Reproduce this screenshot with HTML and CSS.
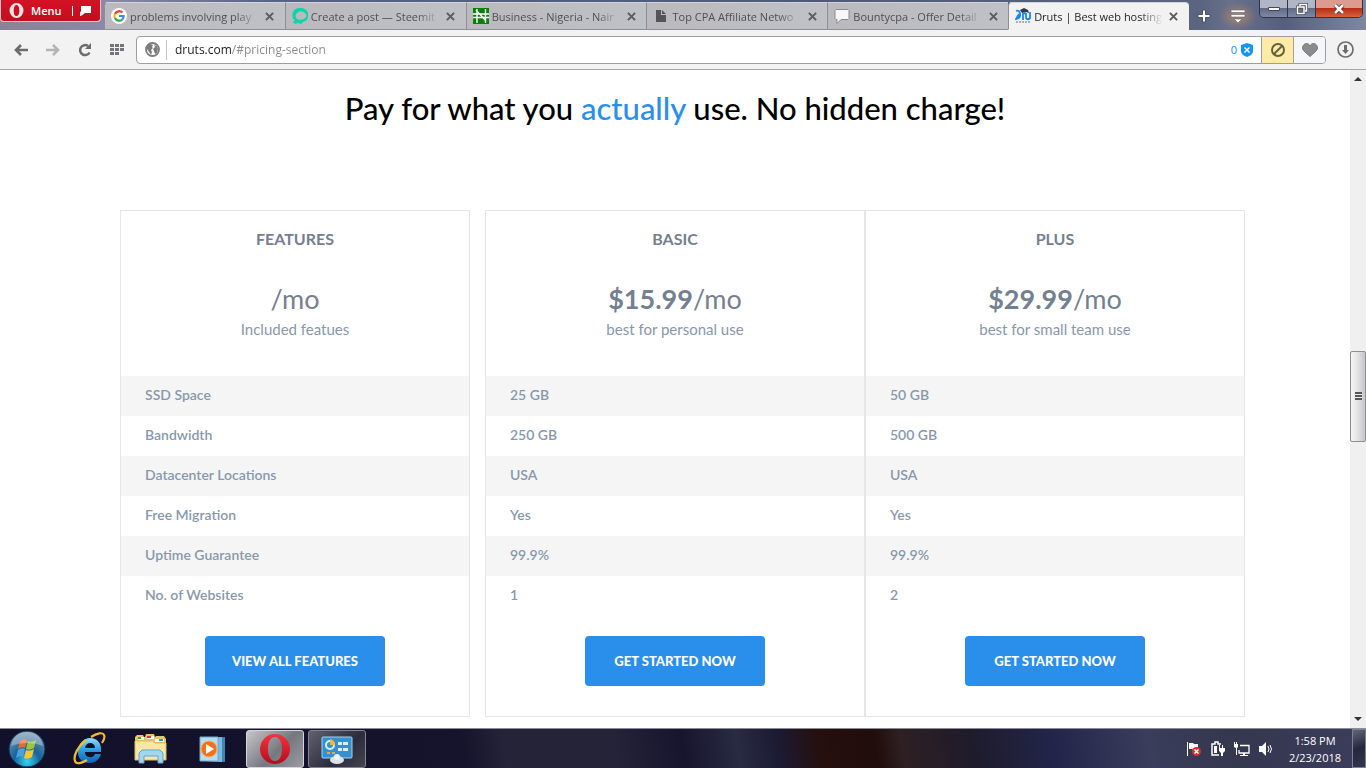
FILE: index.html
```
<!DOCTYPE html>
<html lang="en">
<head>
    <meta charset="UTF-8">
    <meta name="viewport" content="width=device-width, initial-scale=1.0">
    <title>Druts | Best web hosting</title>
    <link rel="stylesheet" href="styles.css">
</head>
<body>
    <svg class="sprite" aria-hidden="true">
        <symbol id="icon-close" viewBox="0 0 10 10">
            <path d="M1 1l8 8M9 1l-8 8" stroke="currentColor" stroke-width="2.2" fill="none"/>
        </symbol>
    </svg>

    <header class="tab-strip">
        <button class="menu-button">
            <svg width="15" height="15" viewBox="0 0 15 15"><path fill-rule="evenodd" fill="#f0e4e5" d="M7.500 0a7 7.500 0 1 0 0 15a7 7.500 0 1 0 0-15zM7.500 2c2 0 2.800 2.500 2.800 5.500S9.500 13 7.500 13s-2.800-2.500-2.800-5.500S5.500 2 7.500 2z"/></svg>
            <span class="menu-label">Menu</span>
            <svg width="11" height="10" viewBox="0 0 11 10"><path fill="#fff" d="M1 0h10v7H5L1 10H0V7l1-2z"/></svg>
        </button>
        <nav class="tabs">
            <div class="tab">
                <svg class="favicon" viewBox="0 0 16 16"><circle cx="8" cy="8" r="8" fill="#fff"/><g fill="none" stroke-width="2.200"><path stroke="#ea4335" d="M4 6a4.600 4.600 0 0 1 7.500-1.400"/><path stroke="#fbbc05" d="M4 6a4.600 4.600 0 0 0 0 4"/><path stroke="#34a853" d="M4 10a4.600 4.600 0 0 0 7.300 1.500"/><path stroke="#4285f4" d="M8 8h4.600a4.600 4.600 0 0 1-1.300 3.500"/></g></svg>
                <a href="#" class="tab-title">problems involving play</a>
                <button class="tab-close" aria-label="Close tab"><svg><use href="#icon-close"/></svg></button>
            </div>
            <div class="tab">
                <svg class="favicon" viewBox="0 0 16 16"><path fill="#06d6a9" fill-rule="evenodd" d="M1 11C-1 5 2 0 8 0c4 0 7 2 8 5 1 4-1 8-5 9l-2 2-3-1-3 1-2-2 2-2zM5 5c-2 2-2 4 0 6l3 1 4-1c2-1 3-3 2-5-2-3-6-4-9-1z"/></svg>
                <a href="#" class="tab-title">Create a post — Steemit</a>
                <button class="tab-close" aria-label="Close tab"><svg><use href="#icon-close"/></svg></button>
            </div>
            <div class="tab">
                <svg class="favicon" viewBox="0 0 16 16"><path fill="#078007" d="M0 0h16v16H0z"/><path fill="none" stroke="#fff" stroke-width="1.400" d="M4 1v14M12.500 1v14M0 6h16M0 9.500h16M3 2l10 11"/></svg>
                <a href="#" class="tab-title">Business - Nigeria - Nair</a>
                <button class="tab-close" aria-label="Close tab"><svg><use href="#icon-close"/></svg></button>
            </div>
            <div class="tab">
                <svg class="favicon" viewBox="0 0 16 16"><path fill="#555558" d="M3 2h5v5h5v7H3zM9 2l4 4H9z"/></svg>
                <a href="#" class="tab-title">Top CPA Affiliate Netwo</a>
                <button class="tab-close" aria-label="Close tab"><svg><use href="#icon-close"/></svg></button>
            </div>
            <div class="tab">
                <svg class="favicon" viewBox="0 0 16 16"><path fill="#f7f7f7" stroke="#8b8b8e" d="M2 1.500h12l1 1v8l-1 1H7l-4 4v-4H2l-1-1v-8z"/></svg>
                <a href="#" class="tab-title">Bountycpa - Offer Detail</a>
                <button class="tab-close" aria-label="Close tab"><svg><use href="#icon-close"/></svg></button>
            </div>
            <div class="tab active">
                <svg class="favicon" viewBox="0 0 16 16"><g fill="none" stroke="#1687f8" stroke-width="1.800"><path d="M1 3c5-2 6 7 0 8l3-5M8 12V6l3-1M11 5v4c0 3 4 3 4 0V4M15 4v7"/></g><path fill="#333a46" d="M5 2l4-2 4 2 1 3-3-1-4 1z"/><path stroke="#626a78" stroke-dasharray="2 1" d="M1 14h14"/></svg>
                <a href="#" class="tab-title">Druts | Best web hosting</a>
                <button class="tab-close" aria-label="Close tab"><svg><use href="#icon-close"/></svg></button>
            </div>
        </nav>
        <button class="strip-button" aria-label="New tab">
            <svg width="14" height="14" viewBox="0 0 14 14"><path fill="#fff" stroke="#4a5066" d="M5.500 1h3v4.500H13v3H8.500V13h-3V8.500H1v-3h4.500z"/></svg>
        </button>
        <button class="strip-button tab-menu" aria-label="Tab menu">
            <svg width="16" height="15" viewBox="0 0 16 15"><path fill="#fff" stroke="#625f69" stroke-width=".6" d="M1 1h14v2.500H1zM1 5.500h14V8H1zM4 10h8l-4 4z"/></svg>
        </button>
        <div class="window-buttons">
            <button aria-label="Minimize"><svg width="12" height="6"><path fill="#fff" stroke="#454a59" d="M.5 1.500h11v3H.5z"/></svg></button>
            <button aria-label="Restore"><svg width="12" height="12" viewBox="0 0 12 12"><g fill="none"><path stroke="#454a59" stroke-width="3" d="M4 3V1.500h6.500V8H9M1.500 4H8v6.500H1.500z"/><path stroke="#fff" stroke-width="1.500" d="M4 3V1.500h6.500V8H9M1.500 4H8v6.500H1.500z"/></g></svg></button>
            <button class="window-close" aria-label="Close"><svg width="12" height="10" viewBox="0 0 12 10"><path stroke="#5a2626" stroke-width="4" d="M2 1l8 8M10 1L2 9"/><path stroke="#fff" stroke-width="2.500" d="M2 1l8 8M10 1L2 9"/></svg></button>
        </div>
    </header>

    <div class="toolbar">
        <button class="tool" aria-label="Back"><svg width="14" height="12" viewBox="0 0 14 12"><path d="M7 1L2 6l5 5M2 6h12" fill="none" stroke="#6b6c6e" stroke-width="2.600"/></svg></button>
        <button class="tool" aria-label="Forward"><svg width="14" height="12" viewBox="0 0 14 12"><path d="M7 1l5 5-5 5M12 6H0" fill="none" stroke="#b4b4b6" stroke-width="2.600"/></svg></button>
        <button class="tool" aria-label="Reload"><svg width="14" height="14" viewBox="0 0 14 14"><path d="M11.500 9.500A5 5 0 1 1 10 3" fill="none" stroke="#6b6c6e" stroke-width="2.500"/><path d="M13 0v6H7z" fill="#6b6c6e"/></svg></button>
        <button class="tool" aria-label="Speed dial"><svg width="14" height="11" viewBox="0 0 14 11"><path d="M0 0h4v3H0zM5 0h4v3H5zM10 0h4v3h-4zM0 4h4v3H0zM5 4h4v3H5zM10 4h4v3h-4zM0 8h4v3H0zM5 8h4v3H5z" fill="#737476"/></svg></button>
        <div class="address-bar">
            <span class="site-info"><svg width="15" height="15" viewBox="0 0 15 15"><circle cx="7.500" cy="7.500" r="6.500" fill="#fff" stroke="#7c7c7e" stroke-width="1.800"/><path fill="#7c7c7e" d="M2 4l3-2 3 1-1 2 1 1-2 2 1 2-1 3-2-3-2-3zM9 3l3 1 1 3-1 4-2 1-1-3-1-2 2-2z"/></svg></span>
            <input class="address" type="text" aria-label="Address" value="druts.com/#pricing-section">
            <span class="blocked">0</span>
            <svg class="shield" width="12" height="14" viewBox="0 0 12 14"><path fill="#0b97ff" d="M6 0l6 2v6c0 3-3 5-6 6-3-1-6-3-6-6V2z"/><path stroke="#fff" stroke-width="1.500" d="M3.500 4.500l5 5M8.500 4.500l-5 5"/></svg>
            <button class="ad-block" aria-label="Ad blocker"><svg width="14" height="14" viewBox="0 0 14 14"><circle cx="7" cy="7" r="6" fill="none" stroke="#65603f" stroke-width="2"/><path stroke="#65603f" stroke-width="2" d="M3 11l8-8"/></svg></button>
            <button class="bookmark" aria-label="Bookmark"><svg width="16" height="14" viewBox="0 0 16 14"><path fill="#8b8b8c" stroke="#747475" d="M8 13.500L1.500 7.500C-1 4 2 .5 4.500.5 6 .5 7.500 1.500 8 3c.5-1.500 2-2.500 3.500-2.500C14 .5 17 4 14.500 7.500z"/></svg></button>
        </div>
        <button class="download" aria-label="Downloads"><svg width="17" height="17" viewBox="0 0 17 17"><circle cx="8.500" cy="8.500" r="7.500" fill="none" stroke="#6c6d6f" stroke-width="1.700"/><path fill="#6c6d6f" d="M7 4h3v5h2l-3.500 4L5 9h2z"/></svg></button>
    </div>

    <div class="viewport">
        <main class="page" id="pricing-section">
            <h1>Pay for what you <span>actually</span> use. No hidden charge!</h1>
            <div class="pricing">
                <section class="plan plan-features">
                    <h2>FEATURES</h2>
                    <p class="price">/mo</p>
                    <p class="note">Included featues</p>
                    <ul>
                        <li>SSD Space</li>
                        <li>Bandwidth</li>
                        <li>Datacenter Locations</li>
                        <li>Free Migration</li>
                        <li>Uptime Guarantee</li>
                        <li>No. of Websites</li>
                    </ul>
                    <a href="#" class="btn">VIEW ALL FEATURES</a>
                </section>
                <section class="plan">
                    <h2>BASIC</h2>
                    <p class="price"><b>$15.99</b>/mo</p>
                    <p class="note">best for personal use</p>
                    <ul>
                        <li>25 GB</li>
                        <li>250 GB</li>
                        <li>USA</li>
                        <li>Yes</li>
                        <li>99.9%</li>
                        <li>1</li>
                    </ul>
                    <a href="#" class="btn">GET STARTED NOW</a>
                </section>
                <section class="plan">
                    <h2>PLUS</h2>
                    <p class="price"><b>$29.99</b>/mo</p>
                    <p class="note">best for small team use</p>
                    <ul>
                        <li>50 GB</li>
                        <li>500 GB</li>
                        <li>USA</li>
                        <li>Yes</li>
                        <li>99.9%</li>
                        <li>2</li>
                    </ul>
                    <a href="#" class="btn">GET STARTED NOW</a>
                </section>
            </div>
        </main>
        <div class="scrollbar">
            <svg width="8" height="4"><path fill="#333" d="M0 4l4-4 4 4z"/></svg>
            <div class="track"><div class="thumb"></div></div>
            <svg width="8" height="4"><path fill="#333" d="M0 0l4 4 4-4z"/></svg>
        </div>
    </div>

    <footer class="taskbar">
        <button class="start" aria-label="Start">
            <svg width="38" height="38" viewBox="0 0 38 38">
                <defs>
                    <radialGradient id="orb" cx=".5" cy=".85" r=".8"><stop offset="0" stop-color="#35d5f5"/><stop offset=".45" stop-color="#17639a"/><stop offset="1" stop-color="#6f93ae"/></radialGradient>
                </defs>
                <circle cx="19" cy="19" r="18" fill="url(#orb)" stroke="#0c2b44"/>
                <path fill="#ea6a2d" d="M12 11c3-2 5-2 7-1l-2 8c-2-1-4-1-7 1z"/>
                <path fill="#95c83d" d="M20 11c2 1 5 1 8-1l-2 8c-3 2-6 2-8 1z"/>
                <path fill="#4aa3e0" d="M10 20c3-2 5-2 7-1l-2 8c-2-1-4-1-7 1z"/>
                <path fill="#fcc52e" d="M18 20c2 1 5 1 8-1l-2 8c-3 2-6 2-8 1z"/>
                <path fill="#fff" opacity=".3" d="M3 16C5 6 12 2 19 2s14 4 16 14c-10-4-22-4-32 0z"/>
            </svg>
        </button>
        <button class="launcher" aria-label="Internet Explorer">
            <svg width="34" height="34" viewBox="0 0 34 34">
                <defs><linearGradient id="ie" x2="0" y2="1"><stop stop-color="#8fdcff"/><stop offset=".5" stop-color="#2a9ae4"/><stop offset="1" stop-color="#0f62b8"/></linearGradient></defs>
                <path fill="url(#ie)" fill-rule="evenodd" d="M18 6c7 0 12 5 11 14H13c0 6 8 7 10 2h6c-2 6-6 9-12 9C10 31 5 26 6 18 7 11 12 6 18 6zM13 16h10c0-6-9-7-10 0z"/>
                <path fill="none" stroke="#f5bb2f" stroke-width="2.200" d="M19 5C25 1 31 0 32 3c1 2 0 5-2 8M14 8C6 14 1 24 3 29c1 4 7 2 12-1"/>
            </svg>
        </button>
        <button class="launcher" aria-label="Windows Explorer">
            <svg width="34" height="34" viewBox="0 0 34 34">
                <path fill="#e6c66c" d="M1 5l2-2h6l1 2h1l1-3h8l1 3 1-1h8l2 3v20H1z"/>
                <path fill="#fff" d="M4 5h6v3H4zM13 4h7v3h-7zM21 7h9v3h-9z"/>
                <path fill="#43a047" d="M4 5h3v2H4z"/><path fill="#d33" d="M13 4h4v2h-4z"/><path fill="#3498db" d="M25 7h4v2h-4z"/>
                <path fill="#f8e6a3" stroke="#d9bc69" d="M1 9h18l2 2h11v17H1z"/>
                <path fill="#a4d6f3" stroke="#5ea5d2" d="M5 31V21l3-3h18l3 3v10h-5v-7H10v7z"/>
            </svg>
        </button>
        <button class="launcher" aria-label="Windows Media Player">
            <svg width="34" height="34" viewBox="0 0 34 34">
                <path fill="#3b87b8" d="M10 6l19-1v25l-19-1z"/><path fill="#79bce0" d="M8 6l18-1v25L8 29z"/>
                <path fill="#b7dcef" stroke="#6da8cc" d="M4 5h18v24H4z"/>
                <circle cx="13" cy="17" r="8" fill="#ef731d" stroke="#fab067"/><path fill="#fff" d="M10 12l8 5-8 5z"/>
            </svg>
        </button>
        <button class="task task-active" aria-label="Opera">
            <svg width="34" height="34" viewBox="0 0 34 34">
                <defs><linearGradient id="opera" x2="0" y2="1"><stop stop-color="#f5333f"/><stop offset="1" stop-color="#b50c1c"/></linearGradient></defs>
                <path fill="url(#opera)" fill-rule="evenodd" d="M17 2a15 15 0 1 0 0 30a15 15 0 1 0 0-30zM17 5c5 0 7 6 7 12s-2 12-7 12-7-6-7-12 2-12 7-12z"/>
            </svg>
        </button>
        <button class="task" aria-label="Control Panel">
            <svg width="34" height="34" viewBox="0 0 34 34">
                <rect x="2" y="5" width="30" height="21" rx="1" fill="#368fce" stroke="#9bd6f5"/>
                <circle cx="10" cy="13" r="4" fill="none" stroke="#d7effb" stroke-width="2"/><path fill="#f7b43b" d="M10 7a6 6 0 0 1 5 6h-5z"/>
                <path fill="#d7effb" d="M18 10h4v3h-4zM23 10h5v3h-5zM18 16h4v3h-4zM23 16h5v3h-5z"/><path fill="#f7a72d" d="M7 20h3v2H7zM12 20h3v2h-3z"/>
                <ellipse cx="17" cy="28" rx="7" ry="4" fill="#dce3e8"/><circle cx="17" cy="25" r="3" fill="#eef2f5"/>
            </svg>
        </button>
        <div class="tray">
            <svg width="16" height="16" viewBox="0 0 16 16"><path fill="#fff" d="M1 1h1v14H1zM3 2h4l1 1h4v6H7L6 8H3z"/><circle cx="10.500" cy="10.500" r="4.500" fill="#dc2c2c"/><path stroke="#fff" stroke-width="1.500" d="M8.500 8.500l4 4M12.500 8.500l-4 4"/></svg>
            <svg width="16" height="16" viewBox="0 0 16 16"><path fill="none" stroke="#fff" stroke-width="1.500" d="M11 3H8V1H5v2H2v11h7"/><path fill="#fff" d="M4 5h3v7H4zM9 4h1v3h2V4h1v3h2v3l-2 2v3h-2v-3l-2-2z"/></svg>
            <svg width="16" height="16" viewBox="0 0 16 16"><path fill="none" stroke="#fff" stroke-width="1.300" d="M6 4.500h9v7.500H5V9"/><path fill="#fff" d="M0 1h1v2h1V1h1v2h1v3L3 7v7H2V7L0 6zM9 12h2v2h3v1H6v-1h3z"/></svg>
            <svg width="16" height="16" viewBox="0 0 16 16"><path fill="#fff" d="M1 5h3l4-4v14l-4-4H1z"/><path fill="none" stroke="#fff" d="M10 5q2 3 0 6M12 4q3 4 0 8"/></svg>
        </div>
        <div class="clock"><time>1:58 PM</time><time>2/23/2018</time></div>
        <button class="show-desktop" aria-label="Show desktop"></button>
    </footer>
</body>
</html>
```
FILE: styles.css
```
* {
    box-sizing: border-box;
}

body {
    margin: 0;
    height: 100vh;
    display: flex;
    flex-direction: column;
    overflow: hidden;
    font-family: "Open Sans", "Noto Sans", sans-serif;
    font-size: 11px;
}

button {
    margin: 0;
    padding: 0;
    border: none;
    background: none;
    font: inherit;
    display: flex;
    align-items: center;
    justify-content: center;
    flex: none;
}

svg {
    flex: none;
}

.sprite {
    display: none;
}

/* tab strip */
.tab-strip {
    height: 30px;
    flex: none;
    display: flex;
    align-items: flex-end;
    background: linear-gradient(90deg, #8b8394 0%, #8a89a8 8%, #566384 20%, #4e5a78 60%, #5b6580 88%, #68718c 90%, #555e7c 94%, #8088a0 100%);
}

.menu-button {
    align-self: flex-start;
    width: 101px;
    height: 22px;
    margin-right: 3px;
    padding-left: 8px;
    gap: 7px;
    justify-content: flex-start;
    background: linear-gradient(#d31225, #c40d1d);
    border: 1px solid #e5c5cc;
    border-top: none;
    border-radius: 0 0 4px 4px;
    color: #fff;
    font-weight: 600;
}

.menu-label {
    line-height: 10px;
    padding-right: 11px;
    border-right: 1px solid #fff;
}

.tabs {
    flex: 0 1 1085px;
    display: flex;
    min-width: 0;
}

.tab {
    flex: 1 1 0;
    min-width: 0;
    height: 28px;
    padding: 0 7px 0 6px;
    display: flex;
    align-items: center;
    gap: 3px;
    background: linear-gradient(90deg, #b9b9be, #c0c1c6);
    border-left: 1px solid #8e8f96;
    border-top: 1px solid #d3d4d9;
    border-bottom: 1px solid #8e8f94;
}

.tab:first-child {
    border-top-left-radius: 4px;
}

.tab.active {
    background: #f2f2f2;
    border-bottom-color: #f2f2f2;
    border-radius: 4px 4px 0 0;
}

.favicon {
    width: 16px;
    height: 16px;
}

.tab-title {
    flex: 1;
    overflow: hidden;
    white-space: nowrap;
    color: #505053;
    text-decoration: none;
    mask-image: linear-gradient(90deg, #000 82%, transparent);
}

.active .tab-title {
    color: #1e1e1e;
}

.tab-close {
    width: 16px;
    height: 16px;
    color: #5c5c5f;
}

.tab-close svg {
    width: 9px;
    height: 9px;
}

.strip-button {
    width: 30px;
    height: 28px;
}

.tab-menu {
    width: 38px;
    background: radial-gradient(closest-side, #a8876f, #95777066 70%, transparent);
}

.window-buttons {
    align-self: flex-start;
    height: 18px;
    margin-left: auto;
    margin-right: 3px;
    display: flex;
    border: 1px solid #30364a;
    border-top: none;
    border-radius: 0 0 5px 5px;
    overflow: hidden;
}

.window-buttons button {
    width: 28px;
    background: linear-gradient(#b0b6c5 45%, #626b86 50%, #7e88a4);
    border-right: 1px solid #30364a;
}

.window-buttons .window-close {
    width: 46px;
    background: linear-gradient(#dd9a8e 45%, #b92d17 50%, #d66239);
    border-right: none;
}

/* toolbar */
.toolbar {
    height: 40px;
    flex: none;
    display: flex;
    align-items: center;
    padding: 0 12px 0 5px;
    background: #f2f2f2;
    border-bottom: 1px solid #a5a5a6;
}

.tool {
    width: 32px;
    height: 28px;
}

.address-bar {
    flex: 1;
    min-width: 0;
    height: 28px;
    margin-left: 3px;
    display: flex;
    align-items: center;
    background: #fff;
    border: 1px solid #9d9d9e;
    border-radius: 4px;
    overflow: hidden;
}

.site-info {
    height: 20px;
    padding: 0 6px 0 8px;
    display: flex;
    align-items: center;
    border-right: 1px solid #c4c4c4;
}

/* host part dark, path part grey */
.address {
    flex: 1;
    min-width: 0;
    padding: 0 0 0 8px;
    border: none;
    outline: none;
    font: inherit;
    font-size: 12px;
    color: transparent;
    background: linear-gradient(90deg, #1c1c1c 64px, #88888a 64px);
    -webkit-background-clip: text;
    background-clip: text;
}

.blocked {
    color: #0b97ff;
    margin-right: 4px;
}

.shield {
    margin-right: 8px;
}

.ad-block,
.bookmark {
    width: 32px;
    align-self: stretch;
    border-left: 1px solid #a0a0a0;
    background: #f5f6fa;
}

.ad-block {
    background: #ffeaa6;
}

.download {
    margin-left: 11px;
}

/* page */
.viewport {
    flex: 1;
    min-height: 0;
    display: flex;
    background: #fff;
}

.page {
    flex: 1;
    min-width: 0;
    overflow: hidden;
    font-family: Lato, "Open Sans", sans-serif;
    color: #74808f;
}

h1 {
    margin: 18px 0 82px;
    font-size: 31px;
    line-height: 40px;
    font-weight: 500;
    text-align: center;
    color: #000;
}

h1 span {
    color: #2a8feb;
}

.pricing {
    max-width: 1140px;
    margin: 0 auto;
    display: grid;
    grid-template-columns: repeat(3, 1fr);
}

.plan {
    padding: 16px 0 30px;
    border: 1px solid #e6e6e6;
    text-align: center;
}

.plan-features {
    margin: 0 15px;
}

.plan h2 {
    margin: 0 0 28px;
    font-size: 16px;
    line-height: 24px;
    font-weight: 700;
}

.price {
    margin: 0;
    font-size: 27px;
    line-height: 40px;
    font-weight: 400;
}

.price b {
    font-weight: 700;
}

.note {
    margin: 0 0 37px;
    font-size: 15px;
    line-height: 20px;
    color: #8798ad;
}

.plan ul {
    margin: 0 0 20px;
    padding: 0;
    list-style: none;
    text-align: left;
}

.plan li {
    padding: 0 24px 2px;
    font-size: 14px;
    line-height: 38px;
    font-weight: 600;
    color: #8798ad;
}

.plan li:nth-child(odd) {
    background: #f5f5f5;
}

.btn {
    display: inline-block;
    width: 180px;
    font-size: 13px;
    line-height: 50px;
    font-weight: 900;
    color: #fff;
    background: #2a8feb;
    border-radius: 4px;
    text-decoration: none;
    vertical-align: top;
}

.scrollbar {
    width: 16px;
    flex: none;
    padding: 7px 0;
    display: flex;
    flex-direction: column;
    align-items: center;
    background: #f0f0f0;
}

.track {
    flex: 1;
    align-self: stretch;
    padding-bottom: 6px;
    display: flex;
    flex-direction: column;
    justify-content: center;
}

.thumb {
    height: 91px;
    border: 1px solid #8f8f90;
    border-radius: 2px;
    background:
        repeating-linear-gradient(#555 0 2px, #eee 2px 3px) center / 7px 8px no-repeat,
        linear-gradient(90deg, #f6f6f6, #e2e2e4 50%, #c5c5c9);
}

/* taskbar */
.taskbar {
    height: 40px;
    flex: none;
    display: flex;
    align-items: center;
    border-top: 1px solid #8a8b95;
    color: #fff;
    background: linear-gradient(80deg, #12102a 0%, #16132c 34%, #242338 37%, #242338 45%, #17152e 50%, #282b42 54%, #1c1a33 57%, #260f0d 60%, #200d0c 64%, #2e2023 66%, #1e1b2b 71%, #22254a 77%, #3a3d5b 84%, #35374f 90%, #3b3d5c 100%);
}

.start {
    width: 58px;
    padding-left: 8px;
    justify-content: flex-start;
}

.launcher {
    width: 62px;
}

.task {
    width: 58px;
    height: 38px;
    margin-right: 4px;
    border: 1px solid #85858f;
    border-radius: 3px;
    background: linear-gradient(135deg, #61626e, #2b2b3b 60%, #44454f);
}

.task-active {
    margin-left: 2px;
    border-color: #d6d6da;
    background: linear-gradient(135deg, #c6c6cb, #77777f 55%, #9b9ba2);
}

.tray {
    margin-left: auto;
    margin-right: 4px;
    display: flex;
    gap: 8px;
}

.clock {
    width: 74px;
    display: flex;
    flex-direction: column;
    text-align: center;
    line-height: 17px;
}

.show-desktop {
    width: 14px;
    align-self: stretch;
    border: 1px solid #7d7f92;
    background: linear-gradient(160deg, #62647a, #25273d 50%, #34364f);
}
```
